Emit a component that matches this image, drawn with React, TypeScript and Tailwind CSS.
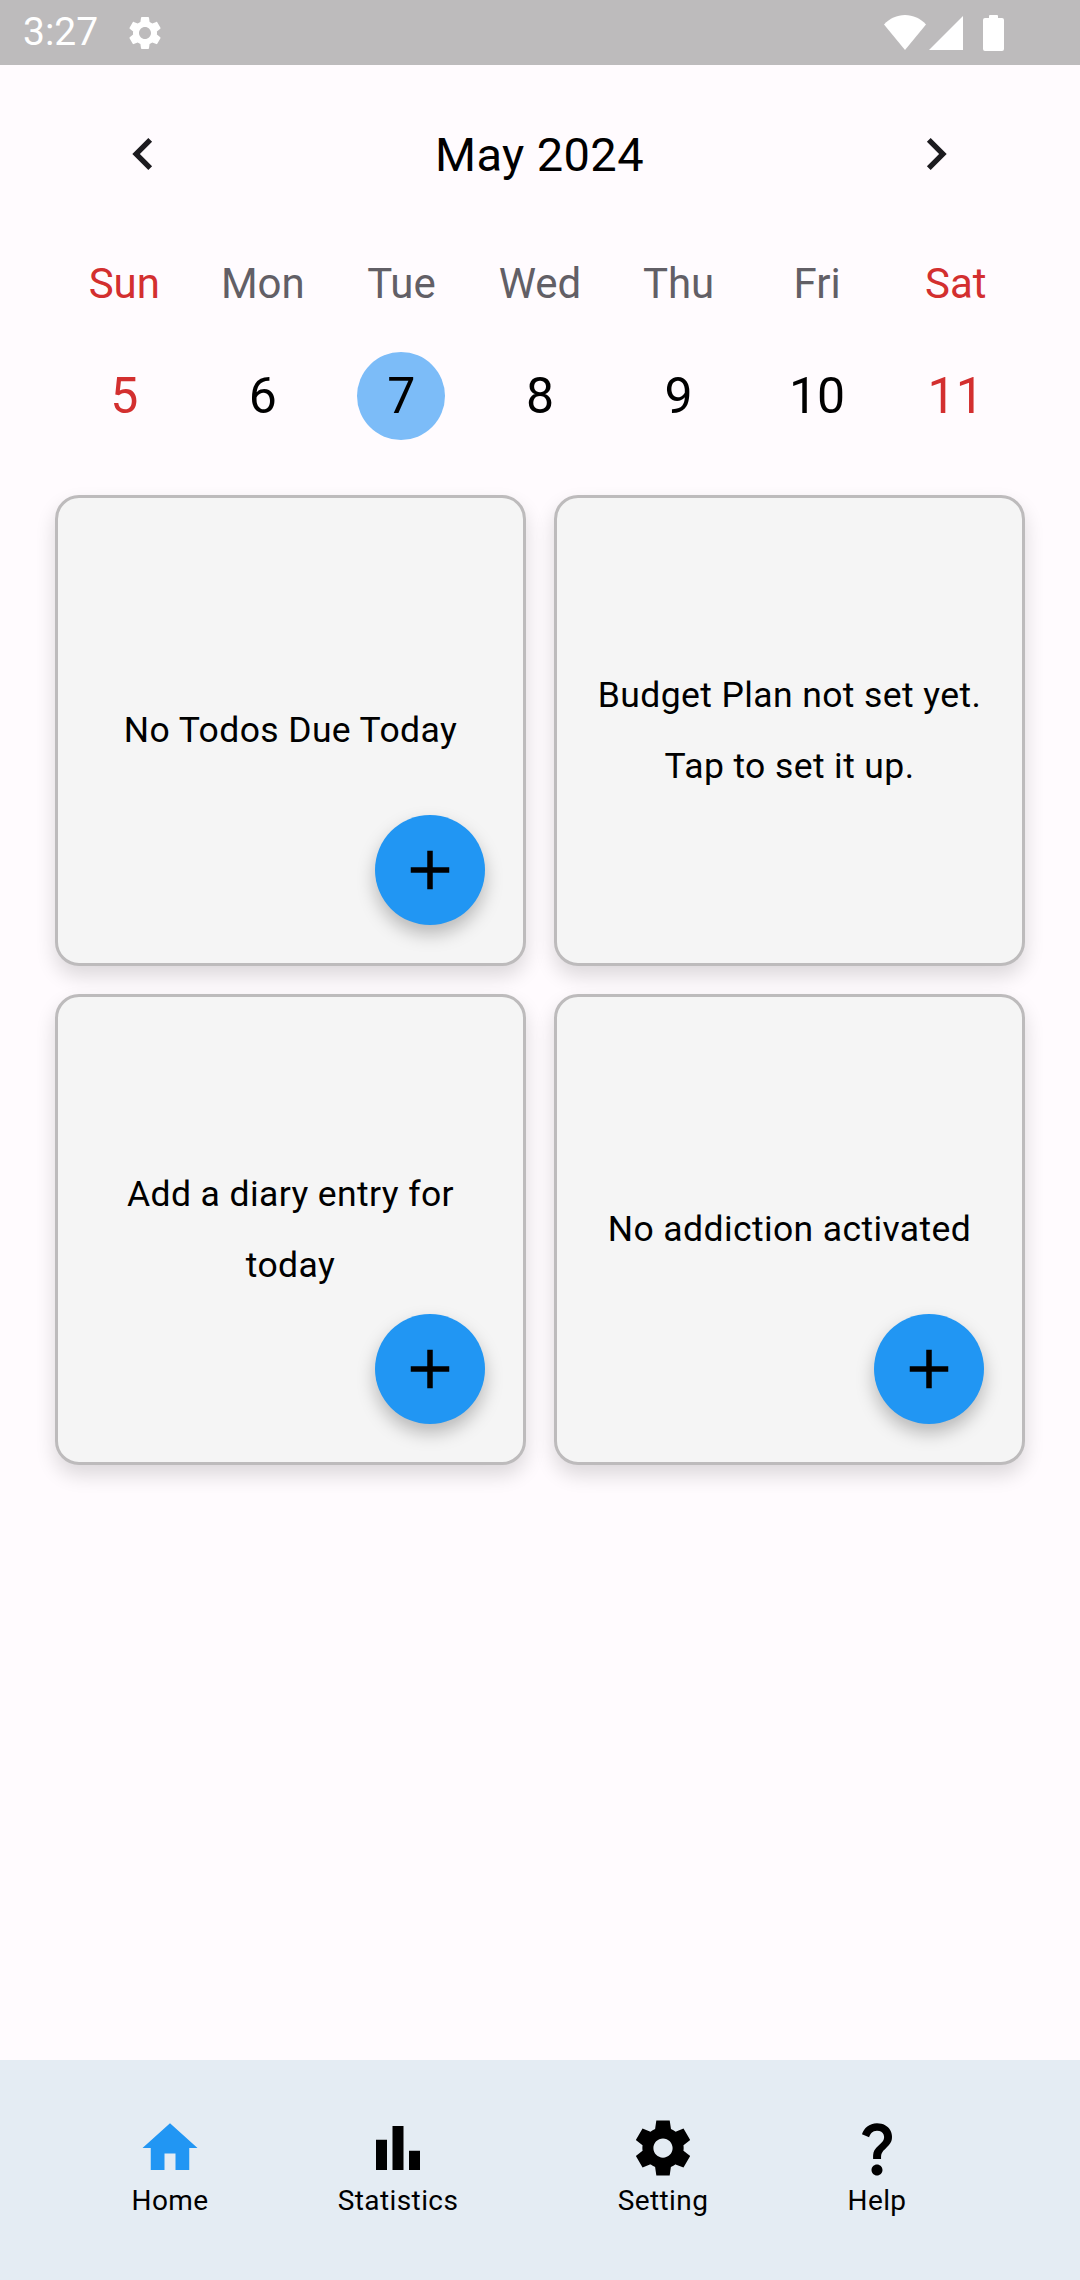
const gearPath =
  "M19.14 12.94c.04-.3.06-.61.06-.94 0-.32-.02-.64-.07-.94l2.03-1.58c.18-.14.23-.41.12-.61l-1.92-3.32c-.12-.22-.37-.29-.59-.22l-2.39.96c-.5-.38-1.03-.7-1.62-.94l-.36-2.54c-.04-.24-.24-.41-.48-.41h-3.84c-.24 0-.43.17-.47.41l-.36 2.54c-.59.24-1.13.57-1.62.94l-2.39-.96c-.22-.08-.47 0-.59.22L2.74 8.87c-.12.21-.08.47.12.61l2.03 1.58c-.05.3-.09.63-.09.94s.02.64.07.94l-2.03 1.58c-.18.14-.23.41-.12.61l1.92 3.32c.12.22.37.29.59.22l2.39-.96c.5.38 1.03.7 1.62.94l.36 2.54c.05.24.24.41.48.41h3.84c.24 0 .44-.17.47-.41l.36-2.54c.59-.24 1.13-.56 1.62-.94l2.39.96c.22.08.47 0 .59-.22l1.92-3.32c.12-.22.07-.47-.12-.61l-2.01-1.58zM12 15.6c-1.98 0-3.6-1.62-3.6-3.6s1.62-3.6 3.6-3.6 3.6 1.62 3.6 3.6-1.62 3.6-3.6 3.6z";

const gearSharpPath =
  "M19.44 12.99l-.01.02c.04-.33.08-.67.08-1.01 0-.34-.03-.66-.07-.99l.01.02 2.44-1.92-2.43-4.22-2.87 1.16.01.01c-.52-.4-1.09-.74-1.71-1h.01L14.44 2H9.57l-.44 3.07h.01c-.62.26-1.19.6-1.71 1l.01-.01-2.88-1.17-2.44 4.22 2.44 1.92.01-.02c-.04.33-.07.65-.07.99 0 .34.03.68.08 1.01l-.01-.02-2.1 1.65-.33.26 2.43 4.2 2.88-1.15-.02-.04c.53.41 1.1.75 1.73 1.01h-.03L9.58 22h4.85s.03-.18.06-.42l.38-2.65h-.01c.62-.26 1.2-.6 1.73-1.01l-.02.04 2.88 1.15 2.43-4.2s-.14-.12-.33-.26l-2.11-1.66zM12 15.5c-1.93 0-3.5-1.57-3.5-3.5s1.57-3.5 3.5-3.5 3.5 1.57 3.5 3.5-1.57 3.5-3.5 3.5z";

function Icon({ d, className }: { d: string; className: string }) {
  return (
    <svg viewBox="0 0 24 24" fill="currentColor" className={className}>
      <path d={d} />
    </svg>
  );
}

function StatusBar() {
  return (
    <div className="h-[65px] bg-[#bdbbbc] flex items-center justify-between pl-[23px] pr-[76px] text-white">
      <div className="flex items-center gap-[31px]">
        <span className="text-[39px] leading-none">3:27</span>
        <Icon d={gearPath} className="w-[40px] h-[40px] -ml-[4px]" />
      </div>
      <div className="flex items-center">
        <svg viewBox="0 0 42 36" fill="currentColor" className="w-[42px] h-[36px]">
          <path d="M0 9.5C5.5 3.5 13 0 21 0s15.5 3.5 21 9.5L21 35z" />
        </svg>
        <svg viewBox="0 0 34 34" fill="currentColor" className="w-[34px] h-[34px] ml-[3px]">
          <path d="M34 0v34H0z" />
        </svg>
        <svg viewBox="0 0 21 36" fill="currentColor" className="w-[21px] h-[36px] ml-[20px]">
          <path d="M6 3V1a1 1 0 0 1 1-1h7a1 1 0 0 1 1 1v2h4a2 2 0 0 1 2 2v29a2 2 0 0 1-2 2H2a2 2 0 0 1-2-2V5a2 2 0 0 1 2-2z" />
        </svg>
      </div>
    </div>
  );
}

const weekDays = [
  { name: "Sun", date: 5, weekend: true },
  { name: "Mon", date: 6 },
  { name: "Tue", date: 7, selected: true },
  { name: "Wed", date: 8 },
  { name: "Thu", date: 9 },
  { name: "Fri", date: 10 },
  { name: "Sat", date: 11, weekend: true },
];

function Calendar() {
  return (
    <div className="px-[55px]">
      <div className="h-[88px] mt-[45px] flex items-center justify-between pl-[56px] pr-[57px]">
        <Icon d="M15.41 7.41 14 6l-6 6 6 6 1.41-1.41L10.83 12z" className="w-[64px] h-[64px] text-[#1c1b1f]" />
        <span className="text-[47px] leading-none text-black tracking-[0.4px]">May 2024</span>
        <Icon d="M10 6 8.59 7.41 13.17 12l-4.58 4.59L10 18l6-6z" className="w-[64px] h-[64px] text-[#1c1b1f]" />
      </div>
      <div className="grid grid-cols-7 mt-[56px]">
        {weekDays.map((day) => (
          <div
            key={day.name}
            className={`h-[60px] flex items-center justify-center text-[42px] leading-none ${
              day.weekend ? "text-[#d32f2f]" : "text-[#625f66]"
            }`}
          >
            {day.name}
          </div>
        ))}
      </div>
      <div className="grid grid-cols-7 mt-[38px]">
        {weekDays.map((day) => (
          <div key={day.date} className="h-[88px] flex items-center justify-center">
            <span
              className={`w-[88px] h-[88px] pb-[1px] rounded-full flex items-center justify-center text-[50px] leading-none ${
                day.selected ? "bg-[#7cbcf8]" : ""
              } ${day.weekend ? "text-[#d32f2f]" : "text-black"}`}
            >
              {day.date}
            </span>
          </div>
        ))}
      </div>
    </div>
  );
}

function Card({ lines, showAdd = true }: { lines: string[]; showAdd?: boolean }) {
  return (
    <div className="relative h-[471px] rounded-[24px] border-[3px] border-[#bdbbbc] bg-[#f5f5f5] shadow-[0_10px_20px_rgba(0,0,0,0.14)] flex flex-col items-center justify-center text-center">
      {lines.map((line) => (
        <p key={line} className="text-[35.5px] leading-[71px] text-black tracking-[0.4px]">
          {line}
        </p>
      ))}
      {showAdd && (
        <button className="absolute right-[38px] bottom-[38px] w-[110px] h-[110px] rounded-full bg-[#2196f3] flex items-center justify-center text-black shadow-[0_9px_18px_rgba(0,0,0,0.25)]">
          <Icon d="M19 13h-6v6h-2v-6H5v-2h6V5h2v6h6v2z" className="w-[66px] h-[66px]" />
        </button>
      )}
    </div>
  );
}

const navItems = [
  { label: "Home", d: "M10 20v-6h4v6h5v-8h3L12 3 2 12h3v8z", active: true },
  { label: "Statistics", d: "M4 9h4v11H4zm12 4h4v7h-4zm-6-9h4v16h-4z" },
  { label: "Setting", d: gearSharpPath },
  {
    label: "Help",
    d: "M11.07 12.85c.77-1.39 2.25-2.21 3.11-3.44.91-1.29.4-3.7-2.18-3.7-1.69 0-2.52 1.28-2.87 2.34L6.54 6.96C7.25 4.83 9.18 3 11.99 3c2.35 0 3.96 1.07 4.78 2.41.7 1.15 1.11 3.3.03 4.9-1.2 1.77-2.35 2.31-2.97 3.45-.25.46-.35.76-.35 2.24h-2.89c-.01-.78-.13-2.05.48-3.15zM14 20c0 1.1-.9 2-2 2s-2-.9-2-2 .9-2 2-2 2 .9 2 2z",
  },
];

function BottomNav() {
  return (
    <div className="h-[220px] bg-[#e4ecf3] pl-[56px] pt-[55px] grid grid-cols-[228px_228px_302px_126px] content-start">
      {navItems.map((item) => (
        <div key={item.label} className="flex flex-col items-center">
          <Icon d={item.d} className={`w-[66px] h-[66px] ${item.active ? "text-[#2196f3]" : "text-black"}`} />
          <span className="text-[28px] leading-[40px] text-black tracking-[0.4px]">{item.label}</span>
        </div>
      ))}
    </div>
  );
}

export default function App() {
  return (
    <div className="w-[1080px] h-[2280px] bg-[#fffbfe] flex flex-col font-['Roboto',sans-serif]">
      <StatusBar />
      <Calendar />
      <div className="flex-1">
        <div className="grid grid-cols-2 gap-x-[28px] gap-y-[28px] px-[55px] mt-[55px]">
          <Card lines={["No Todos Due Today"]} />
          <Card lines={["Budget Plan not set yet.", "Tap to set it up."]} showAdd={false} />
          <Card lines={["Add a diary entry for", "today"]} />
          <Card lines={["No addiction activated"]} />
        </div>
      </div>
      <BottomNav />
    </div>
  );
}
